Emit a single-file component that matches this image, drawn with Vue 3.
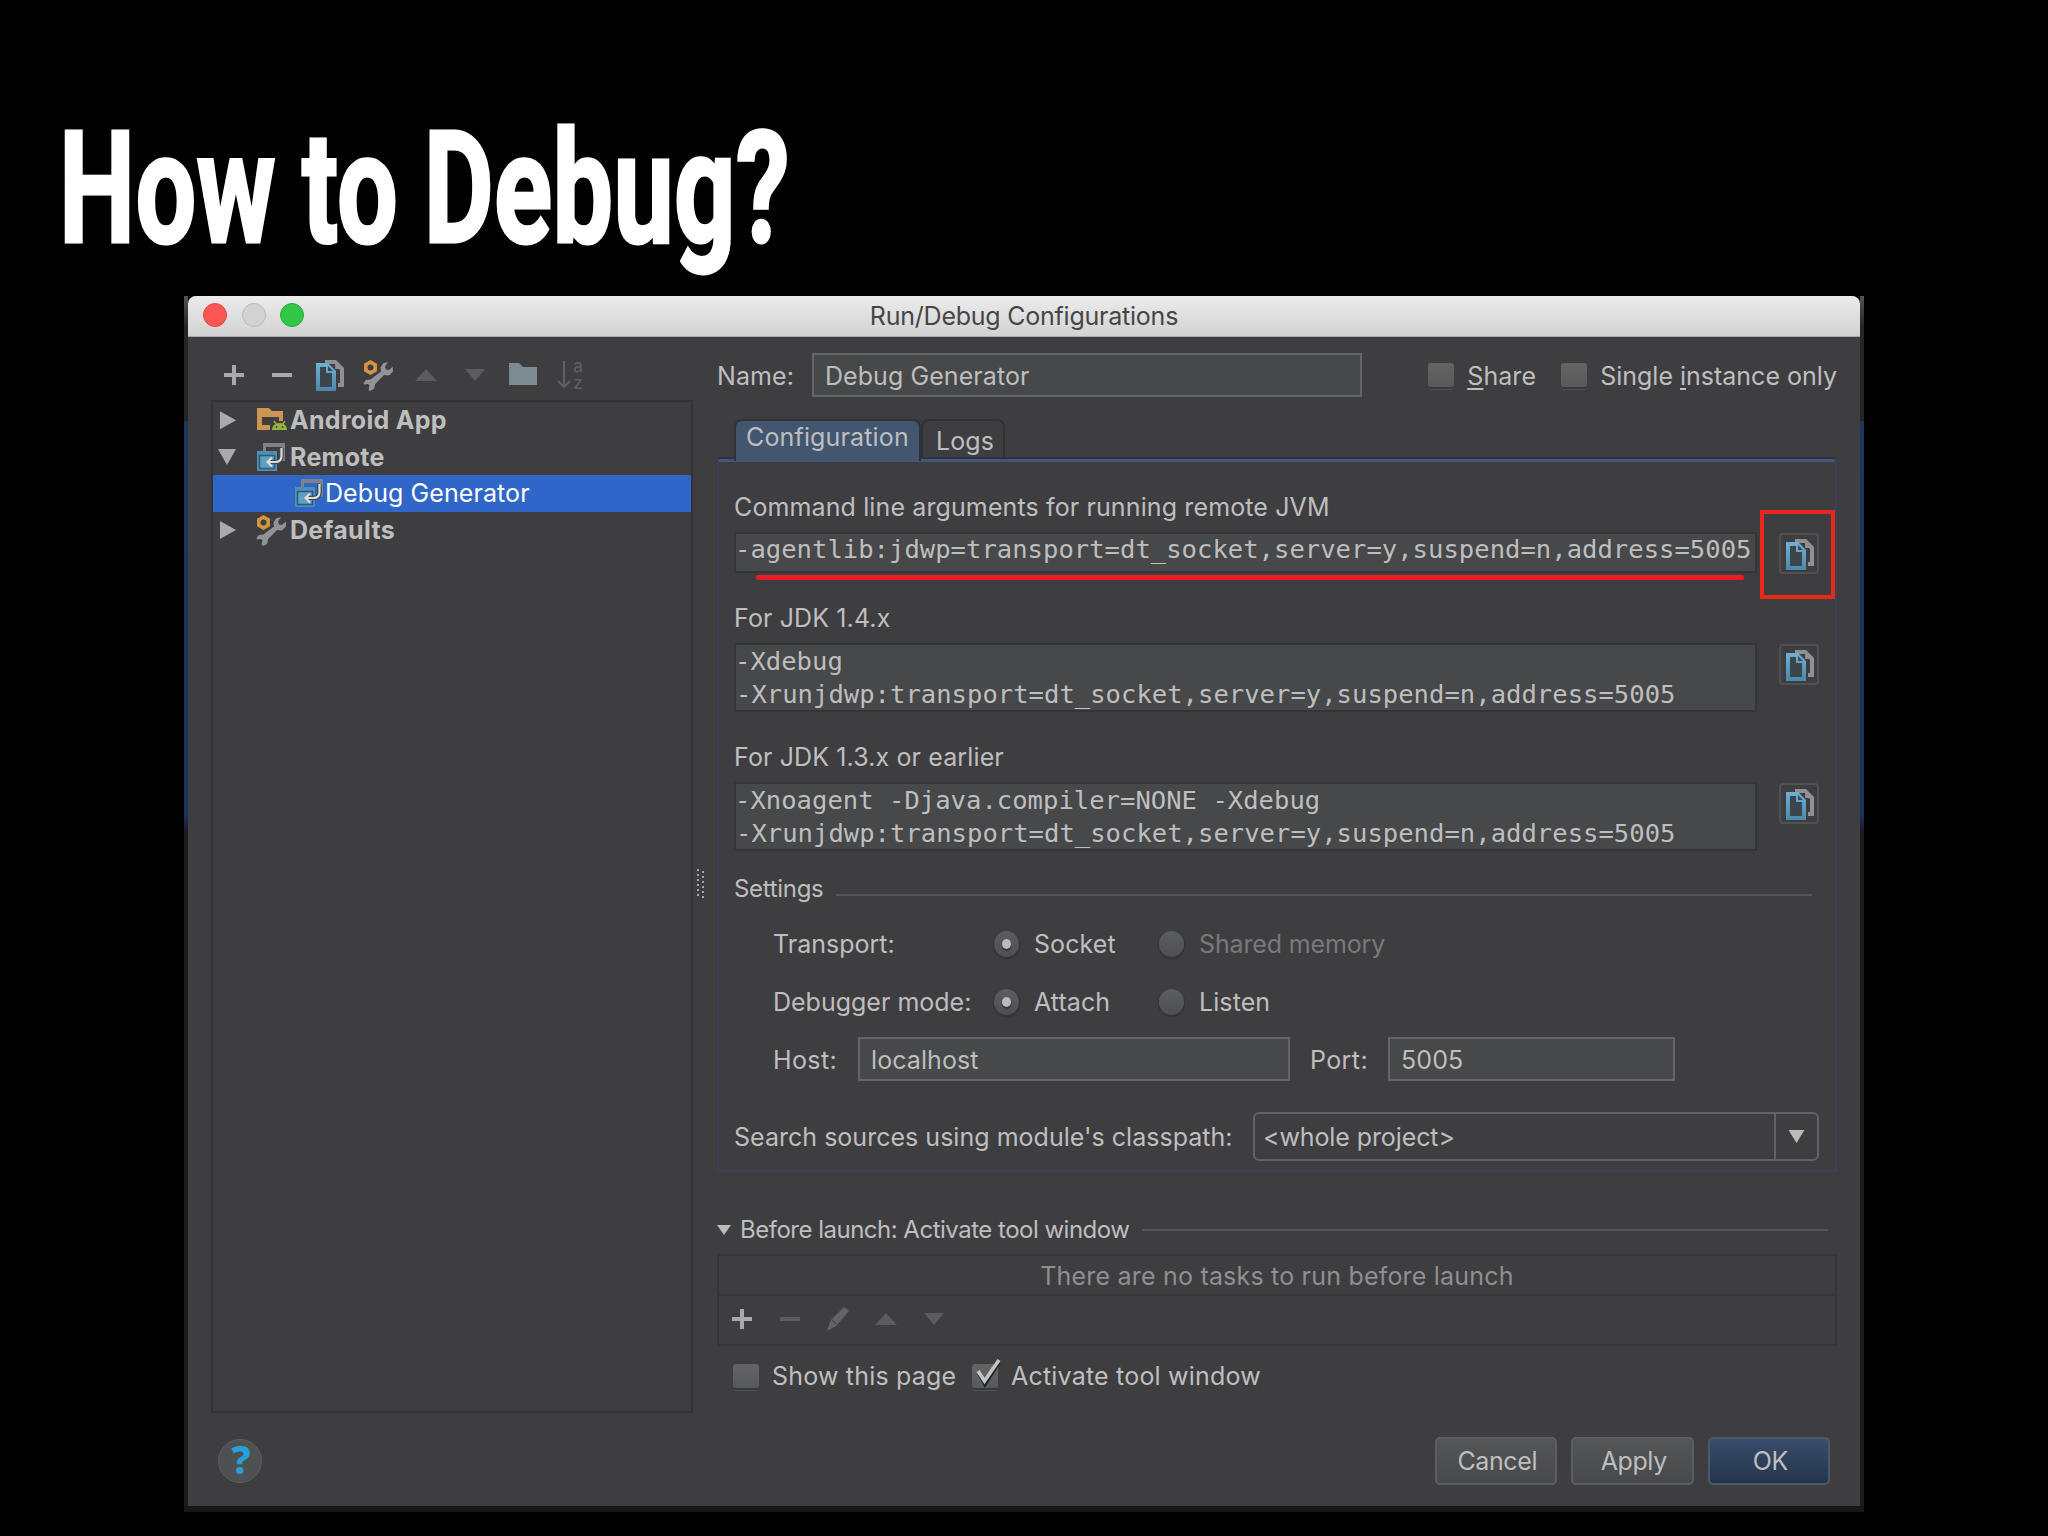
<template>
  <div id="slide">
    <h1>How to Debug?</h1>
    <svg class="defs" width="0" height="0">
      <defs>
        <linearGradient id="blueGrad" x1="0" y1="0" x2="0" y2="1">
          <stop offset="0" stop-color="#6fb0d4" />
          <stop offset="1" stop-color="#4c88ab" />
        </linearGradient>
        <symbol id="i-plus" viewBox="0 0 32 32">
          <path d="M14 6h4v8h8v4h-8v8h-4v-8H6v-4h8z" fill="currentColor" />
        </symbol>
        <symbol id="i-minus" viewBox="0 0 32 32">
          <path d="M6 14h20v4H6z" fill="currentColor" />
        </symbol>
        <symbol id="i-up" viewBox="0 0 32 32">
          <path d="M5 22L16 10l11 12z" fill="currentColor" />
        </symbol>
        <symbol id="i-down" viewBox="0 0 32 32">
          <path d="M6 10h20L16 22z" fill="currentColor" />
        </symbol>
        <symbol id="i-copy" viewBox="0 0 32 32">
          <path d="M11 1h11l8 8v19h-6v-4h2V11h-6V5h-9z" fill="#8f9091" />
          <path d="M20.500 5v5.500h5" fill="none" stroke="#3d3f42" stroke-width="1.200" />
          <path d="M2 4h12l8 8v20H2z" fill="url(#blueGrad)" />
          <path d="M6 8h6v6h6v14H6z" fill="#3b454c" />
          <path d="M14 7l5 5h-5z" fill="#3b4a54" />
        </symbol>
        <symbol id="i-tools" viewBox="0 0 32 32">
          <path
            d="M26 3l-5 1.500-2.500 4 .5 4L8.500 20.500 4 21l-2.500 3 .5 1.500 4-.5 1.500 1.500-1 4 1.500 1.500 4-2 1.200-5L22 16l5 .5 4-4-.3-5-3.700 3.500-3-.5-1-3z"
            fill="#929394"
          />
          <path d="M8.500 1l6.500 3.700v7.600L8.500 16 2 12.300V4.700z" fill="#d39543" />
          <circle cx="8.500" cy="8.500" r="3" fill="#3d3f42" />
        </symbol>
        <symbol id="i-folder" viewBox="0 0 32 32">
          <path d="M2 4h10l4 4h14v18H2z" fill="#7d8a92" />
        </symbol>
        <symbol id="i-sort" viewBox="0 0 32 32">
          <path d="M9 2v25M3 22l6 6 6-6" fill="none" stroke="#5e6062" stroke-width="2.200" />
          <text x="18" y="13" font-size="18" fill="#5e6062">a</text>
          <text x="18" y="30" font-size="18" fill="#5e6062">z</text>
        </symbol>
        <symbol id="i-android" viewBox="0 0 32 32">
          <path d="M2 4h12l3 3h11v10h-4v-4H7v8h8v5H2z" fill="#cb9553" />
          <path d="M17 26c0-4 3-7 7.500-7s7.500 3 7.500 7z" fill="#93b43c" />
          <path d="M19 17l3 4M30 17l-3 4" stroke="#93b43c" stroke-width="1.300" />
          <circle cx="21.500" cy="23" r=".9" fill="#3d3f42" />
          <circle cx="27.500" cy="23" r=".9" fill="#3d3f42" />
        </symbol>
        <symbol id="i-remote" viewBox="0 0 32 32">
          <path d="M8 2h22v18h-5v-3h2V6H11v4H8z" fill="#7f8284" />
          <path d="M2 10h20v20H2z" fill="#4e8fb3" />
          <path d="M4.500 14.500h15v13h-15z" fill="#5f9fc2" stroke="#2f5a78" stroke-width="1.500" />
          <path d="M26.500 7v8c0 4-2 6-6 6H13" fill="none" stroke="#3d4a55" stroke-width="4.600" />
          <path d="M26.500 7v8c0 4-2 6-6 6H12M17 16.500L12.500 21l4.500 4.500" fill="none" stroke="#dcdcdc" stroke-width="2.200" />
        </symbol>
        <symbol id="i-pencil" viewBox="0 0 32 32">
          <path d="M22 4l5 4-13 15-6 3.500-3 1 1.500-4L9 17z" fill="#636466" />
          <path d="M10 17l4.500 4" stroke="#46474a" stroke-width="1.500" />
        </symbol>
      </defs>
    </svg>

    <div id="frame">
      <div class="edge"></div>
      <div id="window">
        <div id="titlebar">
          <div class="lights"><i class="red"></i><i class="gray"></i><i class="green"></i></div>
          <span>Run/Debug Configurations</span>
        </div>

        <div id="main">
          <div id="sidebar">
            <div class="toolbar">
              <span v-for="icon in tools" :key="icon.name" :class="{ off: icon.off }">
                <svg><use :href="'#i-' + icon.name" /></svg>
              </span>
            </div>
            <ul id="tree">
              <li v-for="row in tree" :key="row.text" :class="{ bold: !row.child, selected: row.child }">
                <b v-if="row.arrow" class="arrow" :class="row.arrow"></b>
                <svg><use :href="'#i-' + row.icon" /></svg>
                <span>{{ row.text }}</span>
              </li>
            </ul>
          </div>

          <div id="splitter"><i v-for="n in 12" :key="n"></i></div>

          <div id="editor">
            <div id="name-row">
              <label>Name:</label>
              <div class="input">{{ form.name }}</div>
              <i class="check"></i>
              <span class="share"><u>S</u>hare</span>
              <i class="check"></i>
              <span class="single">Single <u>i</u>nstance only</span>
            </div>

            <div id="tabs">
              <div class="tab active">Configuration</div>
              <div class="tab">Logs</div>
            </div>

            <div id="panel">
              <div v-for="(arg, index) in args" :key="arg.label" class="arg">
                <div class="caption">{{ arg.label }}</div>
                <div class="arg-row">
                  <pre>{{ arg.text }}</pre>
                  <div class="copy"><svg><use href="#i-copy" /></svg></div>
                  <template v-if="index === 0">
                    <div class="mark-line"></div>
                    <div class="mark-box"></div>
                  </template>
                </div>
              </div>

              <div class="section settings"><span>Settings</span><hr /></div>

              <div v-for="group in radios" :key="group.label" class="radio-row">
                <span class="radio-label">{{ group.label }}</span>
                <div v-for="(item, i) in group.items" :key="item" class="radio" :class="{ disabled: item === 'Shared memory' }">
                  <i :class="{ on: i === 0 }"></i>{{ item }}
                </div>
              </div>

              <div class="host-row">
                <span class="host">Host:</span>
                <div class="input">{{ form.host }}</div>
                <span class="port">Port:</span>
                <div class="input small">{{ form.port }}</div>
              </div>

              <div class="search-row">
                <span>Search sources using module's classpath:</span>
                <div class="combo">
                  <span>&lt;whole project&gt;</span>
                  <div><b></b></div>
                </div>
              </div>
            </div>

            <div class="section before"><b></b><span>Before launch: Activate tool window</span><hr /></div>
            <div id="tasks">
              <div class="empty">There are no tasks to run before launch</div>
              <div class="toolbar">
                <span v-for="icon in taskTools" :key="icon.name" :class="{ off: icon.off }">
                  <svg><use :href="'#i-' + icon.name" /></svg>
                </span>
              </div>
            </div>
            <div id="options">
              <i class="check"></i><span class="show">Show this page</span>
              <i class="check">
                <svg viewBox="0 0 32 34">
                  <path d="M7 16l6 11L27 5" fill="none" stroke="#222426" stroke-width="4" />
                  <path d="M6 14l6.500 10L27 3" fill="none" stroke="#c4c4c4" stroke-width="3.600" />
                </svg>
              </i><span>Activate tool window</span>
            </div>
          </div>
        </div>

        <div id="footer">
          <div class="help">?</div>
          <button>Cancel</button>
          <button>Apply</button>
          <button class="primary">OK</button>
        </div>
      </div>
      <div class="edge"></div>
    </div>
  </div>
</template>

<script setup>
import { reactive } from 'vue';

const form = reactive({ name: 'Debug Generator', host: 'localhost', port: '5005' });

const tools = [
  { name: 'plus' },
  { name: 'minus' },
  { name: 'copy' },
  { name: 'tools' },
  { name: 'up', off: true },
  { name: 'down', off: true },
  { name: 'folder' },
  { name: 'sort' }
];

const taskTools = [
  { name: 'plus' },
  { name: 'minus', off: true },
  { name: 'pencil', off: true },
  { name: 'up', off: true },
  { name: 'down', off: true }
];

const tree = [
  { text: 'Android App', icon: 'android', arrow: 'closed' },
  { text: 'Remote', icon: 'remote', arrow: 'open' },
  { text: 'Debug Generator', icon: 'remote', child: true },
  { text: 'Defaults', icon: 'tools', arrow: 'closed' }
];

const args = [
  {
    label: 'Command line arguments for running remote JVM',
    text: '-agentlib:jdwp=transport=dt_socket,server=y,suspend=n,address=5005'
  },
  {
    label: 'For JDK 1.4.x',
    text: '-Xdebug\n-Xrunjdwp:transport=dt_socket,server=y,suspend=n,address=5005'
  },
  {
    label: 'For JDK 1.3.x or earlier',
    text: '-Xnoagent -Djava.compiler=NONE -Xdebug\n-Xrunjdwp:transport=dt_socket,server=y,suspend=n,address=5005'
  }
];

const radios = [
  { label: 'Transport:', items: ['Socket', 'Shared memory'] },
  { label: 'Debugger mode:', items: ['Attach', 'Listen'] }
];
</script>

<style>
body {
  background: #000;
}
</style>

<style scoped>
* {
  box-sizing: border-box;
}

#slide {
  width: 2048px;
  height: 1536px;
  overflow: hidden;
  background: #000;
  font-family: Inter, 'Liberation Sans', sans-serif;
  font-size: 25px;
  line-height: 30px;
  letter-spacing: 0.08px;
  color: #bebebf;
  white-space: nowrap;
}

h1 {
  margin: 0;
  height: 296px;
  padding: 89px 0 0 60px;
  font-family: Roboto, sans-serif;
  font-size: 156px;
  line-height: 200px;
  font-weight: 700;
  letter-spacing: 0.5px;
  word-spacing: -2px;
  color: #fff;
  -webkit-text-stroke: 3px #fff;
  transform: scaleX(0.69);
  transform-origin: 57px 0;
}

.defs {
  position: absolute;
}

#frame {
  display: flex;
  width: 1680px;
  height: 1216px;
  margin-left: 184px;
  padding-bottom: 6px;
  background: linear-gradient(#000 1200px, #18181a 1200px);
}

.edge {
  width: 4px;
  background: linear-gradient(#555 0, #262627 30px, #262627 125px, #1b355f 125px, #1b3258 520px, #1c1c1e 535px);
}

#window {
  width: 1672px;
  height: 1210px;
  background: #3e3e41;
  border-radius: 8px 8px 0 0;
}

#titlebar {
  display: flex;
  align-items: center;
  justify-content: center;
  position: relative;
  height: 41px;
  border-bottom: 1px solid #a9a9a9;
  border-radius: 8px 8px 0 0;
  background: linear-gradient(#ececec, #d3d2d3);
  color: #464646;
  letter-spacing: -0.23px;
}

.lights {
  position: absolute;
  left: 15px;
  top: 7px;
  display: flex;
  gap: 14.500px;
}

.lights i {
  width: 24px;
  height: 24px;
  border-radius: 50%;
}

.red {
  background: #fc5753;
  border: 1px solid #df4744;
}

.gray {
  background: #d2d1d3;
  border: 1px solid #bbbabb;
}

.green {
  background: #33c748;
  border: 1px solid #27aa35;
}

#main {
  display: flex;
  height: 1100px;
  padding-left: 24px;
}

.toolbar {
  display: flex;
  align-items: center;
}

.toolbar span {
  display: flex;
  justify-content: center;
  width: 48.1px;
  color: #a9aaab;
}

.toolbar .off {
  color: #5b5c5f;
}

.toolbar svg {
  width: 32px;
  height: 32px;
}

#sidebar .toolbar {
  height: 63px;
  margin-left: -2px;
  padding-top: 12px;
}

#tree {
  list-style: none;
  width: 482px;
  height: 1013px;
  margin: 0 0 0 -1px;
  padding: 0;
  border: 2px solid #323336;
}

#tree li {
  display: flex;
  align-items: center;
  height: 36.6px;
  padding-left: 5px;
}

#tree svg {
  width: 32px;
  height: 32px;
  margin: 0 3px 0 19px;
}

#tree .bold {
  font-weight: 700;
  letter-spacing: 0.3px;
}

#tree .selected {
  padding-left: 61px;
  background: #3166c9;
  color: #fff;
}

#tree .selected svg {
  margin-left: 19px;
  margin-right: 0;
}

.arrow {
  width: 18px;
  height: 18px;
  background: #a9aaab;
}

.arrow.closed {
  clip-path: polygon(2px 0, 18px 9px, 2px 18px);
}

.arrow.open {
  clip-path: polygon(0 1px, 18px 1px, 9px 17px);
}

#splitter {
  display: grid;
  grid-template-columns: 3px 3px;
  align-content: start;
  gap: 2px;
  width: 24px;
  padding: 532px 0 0 4px;
}

#splitter i {
  width: 2px;
  height: 2px;
  margin-bottom: 1px;
  background: #a5a5a5;
}

#splitter i:nth-child(even) {
  margin: 2px 0 -1px;
}

#editor {
  width: 1120px;
}

#name-row {
  display: flex;
  align-items: center;
  height: 44px;
  margin-top: 16px;
}

#name-row label {
  width: 95px;
}

#name-row label,
#name-row span {
  padding-top: 1px;
}

.input {
  width: 551px;
  height: 44px;
  padding: 6px 0 0 11px;
  border: 2px solid #636567;
  background: #464849;
}

.check {
  position: relative;
  width: 26px;
  height: 24px;
  border-radius: 3px;
  background: linear-gradient(#646465, #58595a);
  box-shadow: 0 3px 0 -1px #37383a, 0 4px 0 -1px #515254;
}

.check svg {
  position: absolute;
  left: 0;
  top: -7px;
  width: 32px;
  height: 34px;
}

#name-row .check {
  margin-left: 66px;
}

#name-row .share {
  width: 82px;
  margin-left: 13px;
}

#name-row .share + .check {
  margin-left: 12px;
}

#name-row .single {
  margin-left: 13px;
  letter-spacing: 0;
}

u {
  text-decoration-thickness: 2px;
  text-underline-offset: 3px;
}

#tabs {
  display: flex;
  height: 38px;
  margin-top: 22px;
  padding-left: 17px;
}

.tab {
  padding: 5px 9px 0 13px;
  height: 38px;
  width: 84px;
  border: 2px solid #303237;
  border-bottom: 0;
  border-radius: 8px 8px 0 0;
}

.tab.active {
  width: 187px;
  height: 42px;
  padding: 1px 0 0 10px;
  background: #42566f;
  letter-spacing: 0.15px;
  position: relative;
}

#panel {
  height: 715px;
  padding: 30px 16px 0 15px;
  border: 2px solid #394259;
  border-top-color: #2c3340;
  box-shadow: inset 0 3px 0 #42567b;
}

.caption {
  height: 30px;
  margin-bottom: 10px;
  letter-spacing: 0.12px;
}

.arg {
  height: 108px;
  margin-bottom: 31px;
}

.arg:first-child {
  height: 81px;
  margin-top: 3px;
  margin-bottom: 30px;
}

.arg:nth-child(3) {
  margin-bottom: 24px;
}

.arg-row {
  position: relative;
  display: flex;
  justify-content: space-between;
}

pre {
  width: 1023px;
  margin: 0;
  border: 2px solid #333538;
  background: #464849;
  font-family: 'DejaVu Sans Mono', monospace;
  font-size: 25.55px;
  letter-spacing: 0.02px;
  line-height: 32.500px;
  height: 69px;
  text-indent: -1px;
}

.arg:first-child pre {
  height: 41px;
  line-height: 31px;
}

.copy {
  display: flex;
  align-items: center;
  justify-content: center;
  width: 40px;
  height: 41px;
  margin: 1px 0 0 0;
  border: 2px solid #505154;
  border-radius: 4px;
}

.copy svg {
  width: 32px;
  height: 32px;
  margin-left: 1px;
}

.mark-line {
  position: absolute;
  left: 22px;
  top: 43px;
  width: 988px;
  height: 5px;
  border-radius: 2px;
  background: #ec1c24;
}

.mark-box {
  position: absolute;
  left: 1026px;
  top: -22px;
  width: 75px;
  height: 89px;
  border: 4px solid #e8281a;
}

.section {
  display: flex;
  align-items: center;
  height: 30px;
  font-size: 24px;
  letter-spacing: -0.3px;
}

.section hr {
  flex: 1;
  height: 2px;
  margin: 0;
  border: 0;
  background: #55565a;
}

.settings hr {
  margin: 12px 7px 0 12px;
}

.radio-row {
  display: flex;
  align-items: center;
  height: 30px;
  margin-top: 25px;
  padding-left: 39px;
}

.radio-row + .radio-row {
  margin-top: 28px;
}

.radio-label {
  width: 221px;
  letter-spacing: 0;
}

.radio {
  display: flex;
  flex: none;
  align-items: center;
  width: 165px;
}

.radio i {
  display: flex;
  flex: none;
  width: 25px;
  height: 26px;
  margin-right: 15px;
  border-radius: 50%;
  background: linear-gradient(#5b5e60, #4d4f52);
  box-shadow: 0 1px 1px 1px #323336;
}

.radio i.on::after {
  content: '';
  width: 9px;
  height: 10px;
  margin: 8px;
  border-radius: 50%;
  background: #bbb;
  box-shadow: 0 2px 1px #333;
}

.disabled {
  color: #78797b;
  letter-spacing: -0.15px;
}

.host-row {
  display: flex;
  align-items: center;
  margin-top: 20px;
  padding-left: 39px;
}

.host {
  width: 85px;
}

.host,
.port {
  padding-top: 1px;
  letter-spacing: 0.4px;
}

.host-row .input {
  width: 432px;
}

.port {
  width: 78px;
  margin-left: 20px;
}

.host-row .input.small {
  width: 287px;
}

.search-row {
  display: flex;
  align-items: center;
  justify-content: space-between;
  margin-top: 31px;
}

.search-row > span {
  letter-spacing: 0.02px;
}

.combo {
  display: flex;
  align-items: center;
  width: 566px;
  height: 49px;
  border: 2px solid #616265;
  border-radius: 6px;
  letter-spacing: -0.1px;
}

.combo span {
  flex: 1;
  padding-left: 8px;
}

.combo div {
  display: flex;
  align-items: center;
  justify-content: center;
  width: 43px;
  height: 45px;
  border-left: 2px solid #616265;
}

.combo b,
.before b {
  width: 16px;
  height: 13px;
  background: #bbb;
  clip-path: polygon(0 0, 100% 0, 50% 100%);
}

.before {
  margin-top: 43px;
  letter-spacing: -0.5px;
}

.before b {
  width: 14px;
  height: 10px;
  margin-right: 9px;
}

.before hr {
  margin: 0 9px 0 13px;
}

#tasks {
  height: 92px;
  margin-top: 9px;
  border: 2px solid #343538;
}

.empty {
  height: 40px;
  padding-top: 5px;
  border-bottom: 2px solid #343538;
  text-align: center;
  letter-spacing: 0.2px;
  color: #8f8f91;
}

#tasks .toolbar {
  height: 46px;
  margin-left: -1px;
}

#options {
  display: flex;
  align-items: center;
  height: 30px;
  margin-top: 15px;
  padding-left: 16px;
  letter-spacing: 0.2px;
}

#options span {
  margin-left: 13px;
}

#options .show {
  width: 201px;
  margin-right: -1px;
}

#footer {
  display: flex;
  align-items: center;
  gap: 14px;
  height: 48px;
  padding: 0 30px;
}

.help {
  display: flex;
  align-items: center;
  justify-content: center;
  width: 44px;
  height: 44px;
  margin-right: auto;
  border: 1px solid #5c5f60;
  border-radius: 50%;
  background: #4d5152;
  font-family: 'Noto Sans', sans-serif;
  font-size: 39px;
  font-weight: 800;
  color: #26a0dc;
  padding: 0 0 4px 2px;
}

button {
  width: 122.500px;
  height: 48px;
  padding: 0 0 0 3px;
  border: 2px solid #5b5e60;
  border-radius: 5px;
  background: linear-gradient(#535557, #47494b);
  font: inherit;
  letter-spacing: -0.4px;
  color: inherit;
}

button.primary {
  background: linear-gradient(#384d6c, #24364c);
  border-color: #4a5a69;
}
</style>
